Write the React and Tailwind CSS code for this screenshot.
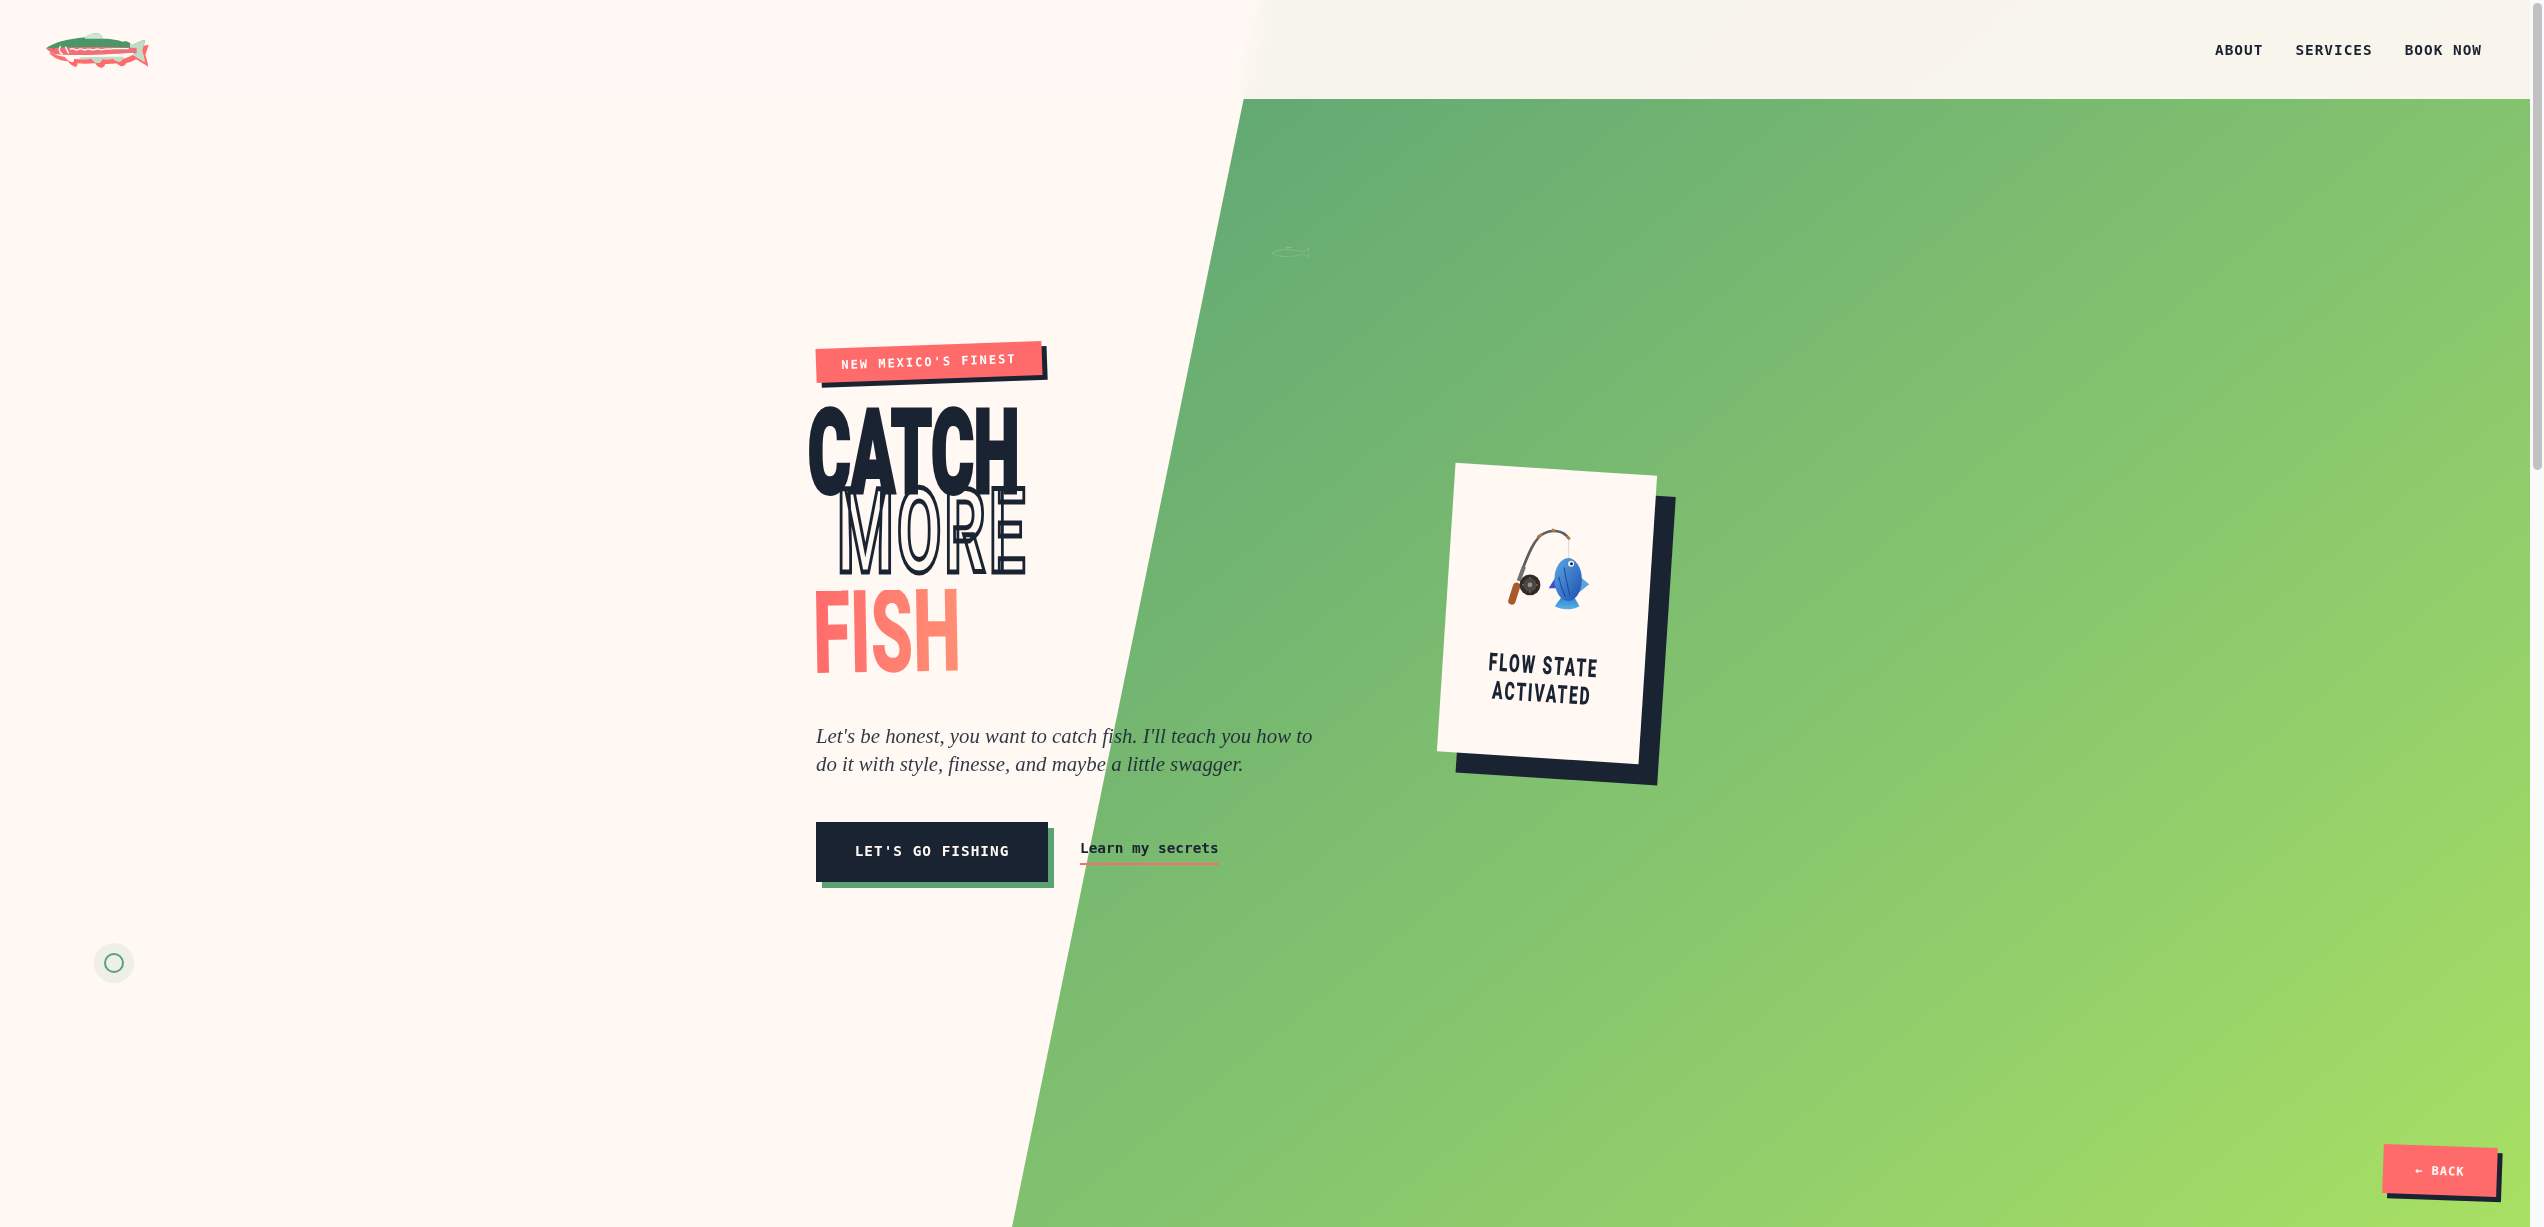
import React from "react";

const NAV_LINKS = ["ABOUT", "SERVICES", "BOOK NOW"];

// trout logo, drawn in crop pixels (3x)
const TROUT =
  "M48 85 C70 68 110 58 165 52 C178 44 195 36 208 42 C214 46 216 52 220 56 C245 56 262 60 280 65 C290 62 298 66 306 76 C316 70 330 62 346 60 C342 74 338 84 336 92 C340 104 344 116 344 126 C332 118 318 110 308 104 C298 110 288 114 278 116 C276 122 270 126 262 124 C256 122 252 118 248 116 C236 118 226 118 216 118 C214 126 206 132 198 128 C190 124 188 120 186 116 C164 118 146 118 132 116 C134 122 130 128 124 126 C114 122 108 116 104 110 C84 108 62 102 48 85 Z";

function TroutLogo() {
  return (
    <svg viewBox="0 0 390 180" className="w-[130px] h-[60px]">
      <defs>
        <pattern id="speck" width="7" height="7" patternUnits="userSpaceOnUse">
          <rect width="7" height="7" fill="#4f9d6c" />
          <circle cx="2" cy="2" r="1.3" fill="#2f7049" />
          <circle cx="5.5" cy="5" r="1" fill="#2f7049" />
        </pattern>
        <clipPath id="troutClip">
          <path d={TROUT} />
        </clipPath>
      </defs>
      <path d={TROUT} fill="#ff6b6b" transform="translate(10 14)" />
      <path d={TROUT} fill="#fff8f3" />
      <g clipPath="url(#troutClip)">
        <rect x="40" y="30" width="320" height="56" fill="url(#speck)" />
        <path d="M160 36 L225 36 L220 56 L165 56 Z" fill="#cfe6d6" />
        <path d="M300 50 L350 50 L350 130 L300 110 Z" fill="#bfdcc8" />
        <path d="M150 110 L280 110 L280 132 L150 132 Z" fill="#bfdcc8" />
        <path d="M44 86 C90 82 200 78 320 84 L320 100 C220 106 110 112 70 102 Z" fill="#f06f78" />
        <path d="M76 102 C120 108 220 104 310 98 L310 106 L100 114 Z" fill="#fff8f3" />
      </g>
      <path
        d="M92 78 C84 86 88 100 98 102 M106 80 L116 100 M120 88 C132 80 136 96 146 88 C156 82 160 94 170 88 C180 84 186 94 196 88 C206 84 212 92 222 88 C232 84 240 90 250 86 L296 86"
        fill="none"
        stroke="#fff8f3"
        strokeWidth="4"
      />
      <circle cx="70" cy="86" r="3" fill="#c9545c" />
    </svg>
  );
}

function SwimmingFish() {
  return (
    <svg viewBox="0 0 40 14" className="w-10 h-3.5 opacity-30">
      <path d="M2 8 C8 4 22 4 33 7 L39 3 L38 12 L33 9 C24 12 8 13 2 8 Z" fill="none" stroke="#dfeee2" strokeWidth="1" strokeDasharray="2 1" />
      <path d="M16 3 L22 2" stroke="#dfeee2" strokeWidth="1" />
    </svg>
  );
}

// fishing pole + blue fish, same look as the emoji
function RodAndFish() {
  return (
    <svg viewBox="255 225 260 260" className="w-[87px] h-[87px] shrink-0 -ml-[3px]">
      <defs>
        <linearGradient id="fishBody" x1="0" y1="0" x2="1" y2="1">
          <stop offset="0" stopColor="#5aa9e6" />
          <stop offset="1" stopColor="#1d4fae" />
        </linearGradient>
        <linearGradient id="fishTail" x1="0" y1="0" x2="0" y2="1">
          <stop offset="0" stopColor="#2a72c9" />
          <stop offset="1" stopColor="#57b4e6" />
        </linearGradient>
      </defs>
      <g transform="rotate(-3.7 385 355)">
        <path d="M445 265 L446 330" stroke="#d4d4d4" strokeWidth="2.5" fill="none" />
        <path d="M302 372 C325 310 345 262 372 250 C395 238 430 240 445 265" stroke="#5b5e63" strokeWidth="8" fill="none" />
        <path d="M352 262 L366 252 M396 238 L404 244 M440 258 L449 268" stroke="#b07a3c" strokeWidth="8" />
        <path d="M312 350 L296 392" stroke="#6f7276" strokeWidth="12" />
        <path d="M290 408 L276 452" stroke="#a85a2a" strokeWidth="22" strokeLinecap="round" />
        <circle cx="330" cy="404" r="31" fill="#2e2b29" />
        <circle cx="330" cy="404" r="20" fill="#4b4743" />
        <circle cx="330" cy="404" r="7" fill="#8f9296" />
        <circle cx="330" cy="383" r="2.5" fill="#b5662e" />
        <circle cx="351" cy="404" r="2.5" fill="#b5662e" />
        <circle cx="330" cy="425" r="2.5" fill="#b5662e" />
        <circle cx="309" cy="404" r="2.5" fill="#b5662e" />
        <path d="M386 414 L408 378 L412 414 Z" fill="#3b4fd0" />
        <path d="M478 378 L507 402 L470 432 Z" fill="#5aa6dd" />
        <path d="M432 430 L456 430 L478 468 C458 480 424 480 404 468 Z" fill="url(#fishTail)" />
        <ellipse cx="444" cy="388" rx="41" ry="64" fill="url(#fishBody)" />
        <path d="M416 380 C420 404 428 424 436 440 M432 352 C438 390 444 416 450 436" stroke="#1a479b" strokeWidth="3" fill="none" />
        <circle cx="453" cy="341" r="9" fill="#eef6ff" />
        <circle cx="454" cy="341" r="4.5" fill="#1c2433" />
      </g>
    </svg>
  );
}

export default function App() {
  return (
    <div className="flex w-full h-[1227px] overflow-hidden bg-[#fafafa]">
      <div className="relative flex-1 h-full bg-[#fff8f3] overflow-hidden font-['DejaVu_Sans_Mono',monospace] text-[#1a2332]">
        {/* slanted green panel */}
        <div className="absolute inset-y-0 left-[40%] w-[60%] bg-gradient-to-br from-[#5aa274] to-[#a8e063] [clip-path:polygon(16.6%_0,100%_0,100%_100%,0_100%)]" />

        <div className="absolute left-[1270px] top-[245px]">
          <SwimmingFish />
        </div>

        <header className="absolute inset-x-0 top-0 h-[99px] flex items-center justify-between pl-[30px] pr-12 bg-[#fff8f3]/95 backdrop-blur-[10px]">
          <TroutLogo />
          <nav className="flex gap-8 pt-[2px] text-[14.4px] tracking-[1px] font-bold">
            {NAV_LINKS.map((l) => (
              <a key={l}>{l}</a>
            ))}
          </nav>
        </header>

        <main className="relative h-full w-[900px] mx-auto flex items-center">
          <div className="w-[500px] ml-px shrink-0">
            <div className="w-[226px] h-[34px] flex items-center justify-center -rotate-2 bg-[#ff6b6b] shadow-[5px_5px_0_#1a2332] text-white text-[12px] font-bold tracking-[2px] mb-8">
              NEW MEXICO'S FINEST
            </div>

            <h1 className="font-['Roboto',sans-serif] font-black text-[116px] leading-[85px]">
              <span className="block h-[85px] -ml-[8px] origin-left scale-x-[.56] whitespace-nowrap [-webkit-text-stroke:4px_#1a2332]">CATCH</span>
              <span className="block h-[85px] -mt-[6px] ml-[21px] origin-left scale-x-[.56] whitespace-nowrap font-bold tracking-[5px] text-transparent [-webkit-text-stroke:5px_#1a2332]">MORE</span>
              <span className="block w-[390px] h-[85px] mt-4 -ml-[3px] origin-left -rotate-1 scale-x-[.585] whitespace-nowrap bg-gradient-to-r from-[#ff6b6b] to-[#ffa07a] bg-clip-text text-transparent">FISH</span>
            </h1>

            <p className="mt-[46px] font-['Liberation_Serif',serif] italic text-[20.8px] leading-[28px] opacity-90 whitespace-nowrap">
              Let's be honest, you want to catch fish. I'll teach you how to
              <br />
              do it with style, finesse, and maybe a little swagger.
            </p>

            <div className="mt-11 flex items-center gap-8">
              <button className="w-[232px] h-[60px] bg-[#1a2332] text-[#fff8f3] text-[14.4px] tracking-[1px] font-bold shadow-[6px_6px_0_#5aa274]">
                LET'S GO FISHING
              </button>
              <a className="text-[14.4px] font-bold pb-[3px] border-b-2 border-[#ff6b6b] -mt-[1px]">Learn my secrets</a>
            </div>
          </div>

          <div className="ml-[130px] w-[202px] h-[289px] shrink-0 rotate-[3.7deg] bg-[#fff8f3] shadow-[20px_20px_0_#1a2332] flex flex-col items-center pt-[56px]">
            <RodAndFish />
            <p className="mt-[40px] font-['Roboto',sans-serif] font-black text-[25px] leading-[28px] text-center tracking-[3px] scale-x-[.62] w-[280px] shrink-0">
              FLOW STATE
              <br />
              ACTIVATED
            </p>
          </div>
        </main>

        {/* cursor ring */}
        <div className="absolute left-[94px] top-[943px] w-10 h-10 rounded-full bg-[#5aa274]/10 flex items-center justify-center">
          <div className="w-5 h-5 rounded-full border-2 border-[#5aa274]" />
        </div>

        <button className="absolute left-[2383px] top-[1146px] w-[114px] h-[49px] rotate-2 bg-[#ff6b6b] shadow-[5px_5px_0_#1a2332] text-[#fff8f3] text-[12px] tracking-[1px] font-bold">
          ← BACK
        </button>
      </div>

      {/* page scrollbar */}
      <div className="w-[14px] h-full shrink-0 pt-[3px] pl-[3px] pr-[2px] bg-[#fafafa]">
        <div className="h-[467px] rounded-[5px] bg-[#c1c1c1]" />
      </div>
    </div>
  );
}
